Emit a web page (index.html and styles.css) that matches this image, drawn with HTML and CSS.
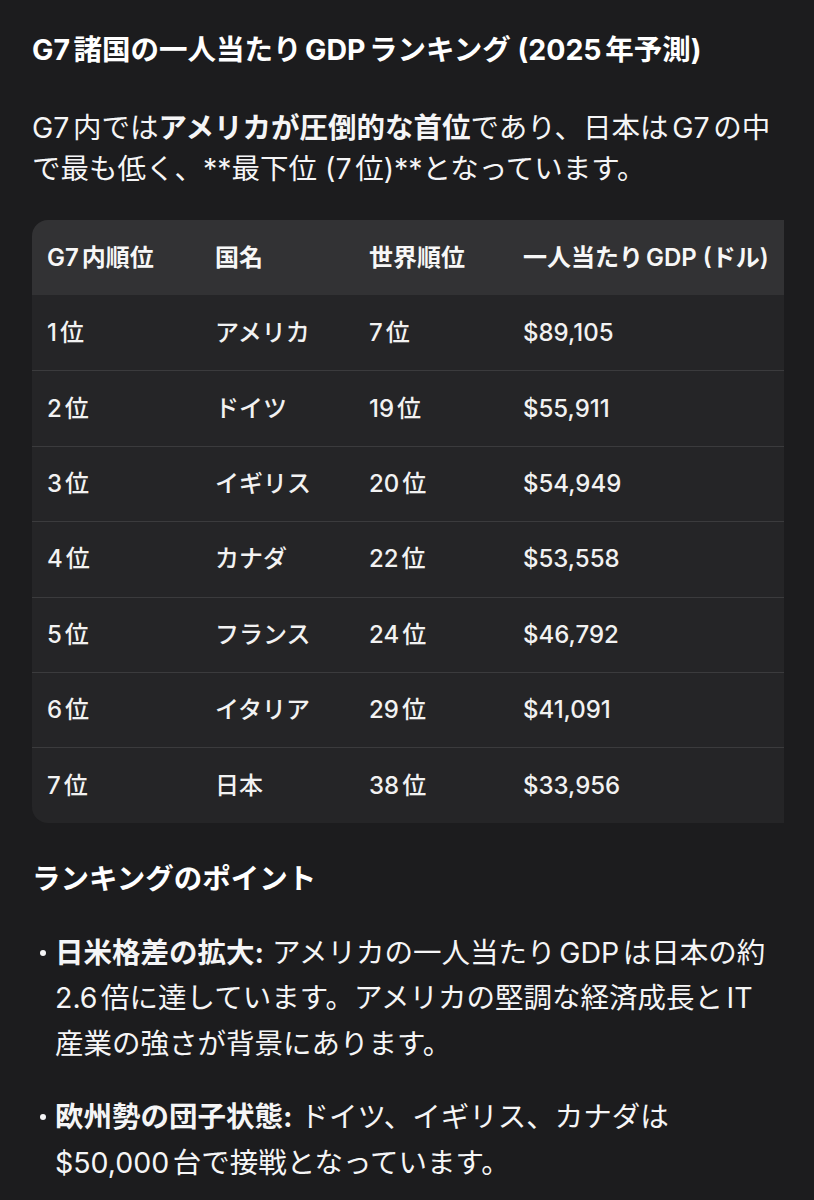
FILE: index.html
```html
<!DOCTYPE html>
<html lang="ja">
<head>
<meta charset="utf-8">
<title>G7諸国の一人当たりGDPランキング</title>
<link rel="stylesheet" href="styles.css">
</head>
<body>
<main class="page">
  <h1 class="title">G7諸国の一人当たりGDPランキング (2025年予測)</h1>
  <p class="lead">G7内では<strong>アメリカが圧倒的な首位</strong>であり、日本はG7の中で最も低く、**最下位 (7位)**となっています。</p>
  <div class="table-wrap">
    <table class="rank">
      <thead>
        <tr><th class="c1">G7内順位</th><th class="c2">国名</th><th class="c3">世界順位</th><th class="c4">一人当たりGDP (ドル)</th></tr>
      </thead>
      <tbody>
        <tr><td>1位</td><td>アメリカ</td><td>7位</td><td>$89,105</td></tr>
        <tr><td>2位</td><td>ドイツ</td><td>19位</td><td>$55,911</td></tr>
        <tr><td>3位</td><td>イギリス</td><td>20位</td><td>$54,949</td></tr>
        <tr><td>4位</td><td>カナダ</td><td>22位</td><td>$53,558</td></tr>
        <tr><td>5位</td><td>フランス</td><td>24位</td><td>$46,792</td></tr>
        <tr><td>6位</td><td>イタリア</td><td>29位</td><td>$41,091</td></tr>
        <tr><td>7位</td><td>日本</td><td>38位</td><td>$33,956</td></tr>
      </tbody>
    </table>
  </div>
  <h2 class="sub">ランキングのポイント</h2>
  <ul class="points">
    <li><strong>日米格差の拡大:</strong> アメリカの一人当たりGDPは日本の約2.6倍に達しています。アメリカの堅調な経済成長とIT産業の強さが背景にあります。</li>
    <li><strong>欧州勢の団子状態:</strong> ドイツ、イギリス、カナダは$50,000台で接戦となっています。</li>
  </ul>
</main>
</body>
</html>
```

FILE: styles.css
```css
html, body {
  margin: 0;
  padding: 0;
  background: #1c1c1e;
}

body {
  font-family: Inter, "Noto Sans CJK JP", sans-serif;
  color: #f5f5f6;
  text-autospace: normal;
}

.page {
  width: 752px;
  padding: 30px 0 0 32px;
}

.title {
  margin: 0;
  font-size: 28.5px;
  line-height: 40px;
  font-weight: 700;
  color: #ffffff;
}

.lead {
  margin: 36.5px 0 0;
  font-size: 28.5px;
  line-height: 41px;
  font-weight: 400;
}

.lead strong {
  font-weight: 700;
}

.table-wrap {
  margin-top: 31.5px;
  overflow: hidden;
}

.rank {
  width: 860px;
  table-layout: fixed;
  border-collapse: separate;
  border-spacing: 0;
  font-size: 24px;
  line-height: 32px;
}

.rank th,
.rank td {
  padding: 0 15px;
  text-align: left;
  vertical-align: middle;
  white-space: nowrap;
  box-sizing: border-box;
}

.rank th {
  height: 75px;
  background: #323234;
  font-weight: 600;
  color: #f7f7f7;
}

.rank td {
  height: 75.4px;
  background: #252527;
  font-weight: 500;
  color: #f2f2f2;
}

.rank tbody tr + tr td {
  border-top: 1px solid #3b3b3d;
}

.rank .c1 { width: 168px; }
.rank .c2 { width: 154px; }
.rank .c3 { width: 154px; }

.rank thead th:first-child {
  border-top-left-radius: 16px;
}

.rank tbody tr:last-child td:first-child {
  border-bottom-left-radius: 16px;
}

.sub {
  margin: 36px 0 0;
  font-size: 28.5px;
  line-height: 40px;
  font-weight: 700;
  color: #ffffff;
}

.points {
  margin: 31px 0 0;
  padding: 0 10px 0 0;
  list-style: none;
  font-size: 28.5px;
  line-height: 45.5px;
}

.points li {
  position: relative;
  padding-left: 23px;
}

.points li + li {
  margin-top: 28px;
}

.points li::before {
  content: "";
  position: absolute;
  left: 8px;
  top: 20px;
  width: 6px;
  height: 6px;
  border-radius: 50%;
  background: #f5f5f6;
}

.points strong {
  font-weight: 700;
}
```
